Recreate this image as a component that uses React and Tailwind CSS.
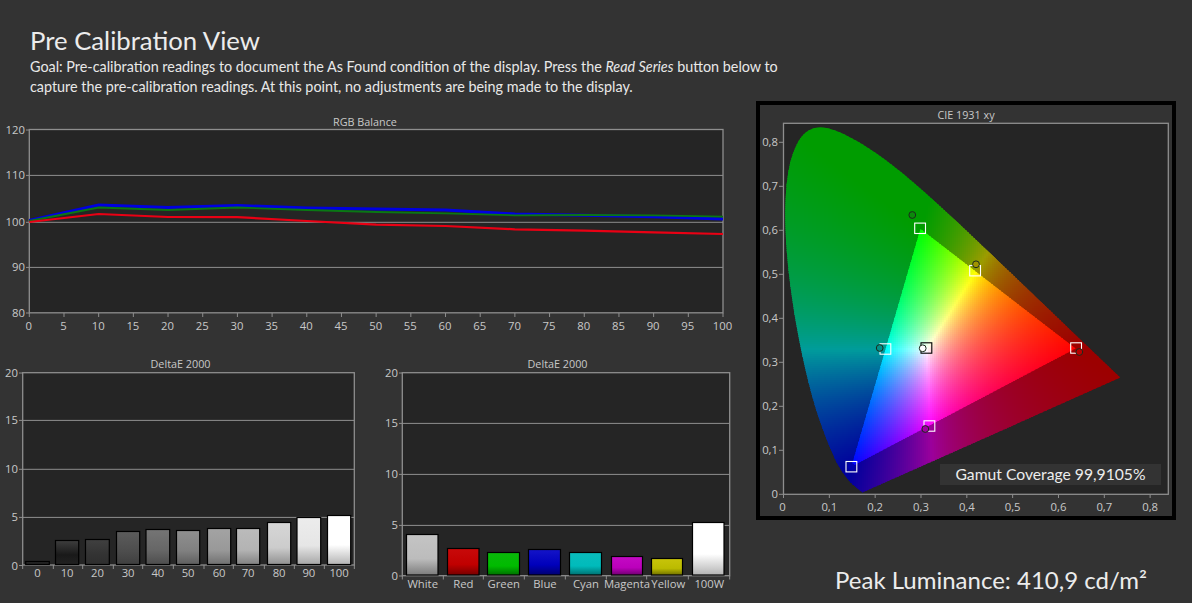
import React from "react";

const AXIS = "#8e8e8e";
const LABEL = "#c8c8c8";
const PLOT = "#252525";
const SANS = "'Open Sans', sans-serif";

const LOCUS = [[.1741,.005],[.1733,.0048],[.1726,.0048],[.1714,.0051],[.1689,.0069],[.1644,.0109],[.1566,.0177],[.144,.0297],[.1241,.0578],[.1096,.0868],[.0913,.1327],[.0687,.2007],[.0454,.295],[.0235,.4127],[.0082,.5384],[.0039,.6548],[.0139,.7502],[.0389,.812],[.0743,.8338],[.1142,.8262],[.1547,.8059],[.1929,.7816],[.2296,.7543],[.2658,.7243],[.3016,.6923],[.3373,.6589],[.3731,.6245],[.4087,.5896],[.4441,.5547],[.4788,.5202],[.5125,.4866],[.5448,.4544],[.5752,.4242],[.6029,.3965],[.627,.3725],[.6482,.3514],[.6658,.334],[.6801,.3197],[.6915,.3083],[.7079,.292],[.719,.2809],[.73,.27],[.7347,.2653]];

const px = (x) => 783.5 + 458.3 * x;
const py = (y) => 494.3 - 440 * y;
const ix = (X) => (X - 783.5) / 458.3;
const iy = (Y) => (494.3 - Y) / 440;

function smooth(points) {
  const out = [];
  const n = points.length;
  for (let i = 0; i < n - 1; i++) {
    const p0 = points[Math.max(i - 1, 0)], p1 = points[i], p2 = points[i + 1], p3 = points[Math.min(i + 2, n - 1)];
    for (let s = 0; s < 6; s++) {
      const t = s / 6, t2 = t * t, t3 = t2 * t;
      const f = (a, b, c, d) => 0.5 * (2 * b + (c - a) * t + (2 * a - 5 * b + 4 * c - d) * t2 + (3 * b - a - 3 * c + d) * t3);
      out.push([f(p0[0], p1[0], p2[0], p3[0]), f(p0[1], p1[1], p2[1], p3[1])]);
    }
  }
  out.push(points[n - 1]);
  return out;
}

function xyToRgb(x, y, k, g) {
  const X = x / y, Z = (1 - x - y) / y;
  let r = 3.2406 * X - 1.5372 - 0.4986 * Z;
  let gr = -0.9689 * X + 1.8758 + 0.0415 * Z;
  let b = 0.0557 * X - 0.204 + 1.057 * Z;
  r = Math.max(r, 0); gr = Math.max(gr, 0); b = Math.max(b, 0);
  const m = Math.max(r, gr, b) || 1;
  const f = (v) => Math.round(255 * k * Math.pow(v / m, g));
  return `rgb(${f(r)},${f(gr)},${f(b)})`;
}

function buildCells(x0, x1, y0, y1, k, g) {
  const out = [];
  const s = 2;
  for (let Y = y0; Y < y1; Y += s) {
    let start = x0, col = null;
    for (let X = x0; X <= x1; X += s) {
      const c = X < x1 ? xyToRgb(ix(X + 1), Math.max(iy(Y + 1), 0.003), k, g) : null;
      if (c !== col) {
        if (col) out.push(<rect key={`${X}-${Y}`} x={start} y={Y} width={X - start + 0.5} height={s + 0.5} fill={col} />);
        start = X; col = c;
      }
    }
  }
  return out;
}

const outerCells = buildCells(782, 1124, 124, 494, 0.61, 1);
const innerCells = buildCells(848, 1080, 226, 470, 1, 0.92);

const pts = (arr) => arr.map(([a, b]) => `${a},${b}`).join(" ");
const locusPts = pts(smooth(LOCUS).map(([x, y]) => [px(x), py(y)]));
const triPts = pts([[1075.5, 348.5], [920.5, 229], [851.5, 466.5]]);

function Chart({ x, y, w, h, className, children }) {
  return (
    <svg width={w} height={h} viewBox={`${x} ${y} ${w} ${h}`} className={`block shrink-0 ${className || ""}`} fontFamily={SANS}>
      {children}
    </svg>
  );
}

function Frame({ l, r, t, b, grid = [] }) {
  return (
    <g>
      <rect x={l} y={t} width={r - l} height={b - t} fill={PLOT} />
      {grid.map((g) => <line key={g} x1={l} x2={r} y1={g} y2={g} stroke={AXIS} strokeWidth="1" />)}
      <rect x={l} y={t} width={r - l} height={b - t} fill="none" stroke={AXIS} strokeWidth="1.3" />
    </g>
  );
}

function YLabels({ items, x }) {
  return items.map(([t, y]) => (
    <g key={t}>
      <line x1={x + 1} x2={x + 5} y1={y} y2={y} stroke={AXIS} />
      <text x={x} y={y + 4} textAnchor="end" fontSize="11.3" fill={LABEL}>{t}</text>
    </g>
  ));
}

function RgbChart() {
  const X = (v) => 29.3 + 6.937 * v;
  const vals = [0, 10, 20, 30, 40, 50, 60, 70, 80, 90, 100];
  const line = (ys) => vals.map((v, i) => `${X(v)},${ys[i]}`).join(" ");
  return (
    <Chart x={0} y={112} w={756} h={226}>
      <text x={365} y={126} textAnchor="middle" fontSize="10.8" fill={LABEL}>RGB Balance</text>
      <Frame l={29.3} r={723} t={129.5} b={312.8} grid={[175.4, 222.3, 267.4]} />
      <YLabels x={25} items={[["120", 130], ["110", 175.4], ["100", 222.3], ["90", 267.4], ["80", 313]]} />
      {Array.from({ length: 21 }, (_, i) => i * 5).map((v) => (
        <g key={v}>
          <line x1={X(v)} x2={X(v)} y1={313} y2={317} stroke={AXIS} />
          <text x={X(v) - 0.5} y={330} textAnchor="middle" fontSize="11.3" fill={LABEL}>{v}</text>
        </g>
      ))}
      <polyline points={line([220.5, 205, 207.5, 205.5, 208, 209, 210, 214, 215.3, 216.7, 219])} fill="none" stroke="#0000e0" strokeWidth="3" />
      <polyline points={line([221, 207.5, 210, 207.5, 210, 212, 213.3, 215.3, 215, 215.3, 216.7])} fill="none" stroke="#0a7814" strokeWidth="1.8" />
      <polyline points={line([222, 214, 217, 217.2, 221, 224.7, 226, 229.3, 230.7, 232.3, 234])} fill="none" stroke="#ea0014" strokeWidth="2.2" />
    </Chart>
  );
}

function Bar({ x0, x1, top, bottom, stops, id }) {
  return (
    <g>
      <defs>
        <linearGradient id={id} x1="0" y1="0" x2="0" y2="1">
          {stops.map(([o, c]) => <stop key={o} offset={o} stopColor={c} />)}
        </linearGradient>
      </defs>
      <rect x={x0} y={top} width={x1 - x0} height={bottom - top} fill={`url(#${id})`} stroke="#000" strokeWidth="1.2" />
    </g>
  );
}

const grayBars = [
  [25.7, 49.3, 561.5, "#2a2a2a", "#222222", "#2a2a2a"],
  [55.5, 78.7, 540.5, "#3e3e3e", "#191919", "#222222"],
  [85.5, 109.3, 539.5, "#404040", "#333333", "#2e2e2e"],
  [116.5, 139.7, 531.5, "#5c5c5c", "#4d4d4d", "#3f3f3f"],
  [146, 169.7, 529.5, "#757575", "#666666", "#4d4d4d"],
  [176.5, 199.7, 530.5, "#8f8f8f", "#808080", "#5e5e5e"],
  [207.5, 230.7, 528.5, "#a3a3a3", "#999999", "#707070"],
  [236.5, 259.7, 528.5, "#bbbbbb", "#b3b3b3", "#818181"],
  [267.5, 290.7, 522.5, "#d6d6d6", "#cccccc", "#909090"],
  [297, 320.7, 517.5, "#ececec", "#e6e6e6", "#a6a6a6"],
  [327.5, 350.7, 515.5, "#ffffff", "#ffffff", "#b4b4b4"],
];
const grayNames = ["0", "10", "20", "30", "40", "50", "60", "70", "80", "90", "100"];

function GrayChart() {
  const ticks = [68, 160, 248, 340, 428, 520, 612, 700, 793, 883, 973, 1063].map((v) => v / 3);
  return (
    <Chart x={0} y={354} w={370} h={240}>
      <text x={180.5} y={368} textAnchor="middle" fontSize="10.8" fill={LABEL}>DeltaE 2000</text>
      <Frame l={22.7} r={354.3} t={372.7} b={565} grid={[420.4, 469.3, 517.4]} />
      <YLabels x={18} items={[["20", 373], ["15", 420.4], ["10", 469.3], ["5", 517.4], ["0", 565.5]]} />
      {ticks.map((t) => <line key={t} x1={t} x2={t} y1={565} y2={569} stroke={AXIS} />)}
      {grayBars.map((b, i) => (
        <Bar key={i} id={`g${i}`} x0={b[0]} x1={b[1]} top={b[2]} bottom={564.5} stops={[[0, b[3]], [0.6, b[4]], [1, b[5]]]} />
      ))}
      {grayBars.map((b, i) => (
        <text key={i} x={(b[0] + b[1]) / 2} y={577} textAnchor="middle" fontSize="11.3" fill={LABEL}>{grayNames[i]}</text>
      ))}
    </Chart>
  );
}

const colorBars = [
  ["White", 406.5, 438, 534.5, "#c4c4c4", "#bcbcbc", "#7c7c7c", 422.7],
  ["Red", 447.5, 479, 548.5, "#c80a0a", "#c00000", "#780000", 463.3],
  ["Green", 487.5, 519.5, 552.5, "#0ab80a", "#00bb00", "#007000", 503.7],
  ["Blue", 528.5, 560.5, 549.5, "#1414c8", "#0000bb", "#000070", 545],
  ["Cyan", 569.5, 601.5, 552.5, "#0abcbc", "#00bbbb", "#007070", 586],
  ["Magenta", 611.5, 642.5, 556.5, "#c40ac4", "#bb00bb", "#700070", 627],
  ["Yellow", 651.5, 682.5, 558.5, "#c8c40a", "#bbbb00", "#707000", 668.3],
  ["100W", 692.5, 724, 522.5, "#ffffff", "#ffffff", "#b4b4b4", 709.3],
];

function ColorChart() {
  const ticks = [97, 220, 340, 463, 586, 709, 830, 955, 1079].map((v) => 370 + v / 3);
  return (
    <Chart x={370} y={354} w={386} h={240}>
      <text x={557.5} y={368} textAnchor="middle" fontSize="10.8" fill={LABEL}>DeltaE 2000</text>
      <Frame l={402.3} r={729.7} t={372.7} b={575.7} grid={[423.4, 474.4, 525.4]} />
      <YLabels x={398} items={[["20", 373], ["15", 423.4], ["10", 474.4], ["5", 525.4], ["0", 576]]} />
      {ticks.map((t) => <line key={t} x1={t} x2={t} y1={575.7} y2={579.5} stroke={AXIS} />)}
      {colorBars.map((b, i) => (
        <Bar key={i} id={`c${i}`} x0={b[1]} x1={b[2]} top={b[3]} bottom={575} stops={[[0, b[4]], [0.6, b[5]], [1, b[6]]]} />
      ))}
      {colorBars.map((b) => (
        <text key={b[0]} x={b[7]} y={588} textAnchor="middle" fontSize="11.3" fill={LABEL}>{b[0]}</text>
      ))}
    </Chart>
  );
}

const squares = [[920, 228.3, "#fff"], [975, 270.7, "#fff"], [1076, 348, "#fff"], [885.3, 349, "#fff"], [926.3, 348, "#000"], [929.3, 426, "#fff"], [851.3, 466.7, "#fff"]];
const circles = [[912.3, 215, "#0b8a0b"], [976, 264.3, "#a09400"], [1079.3, 352, "#b80000"], [879.7, 348, "#009088"], [922.7, 348.3, "#fff"], [925.3, 429, "#a000a0"], [851.3, 466.7, "#0000b0"]];

function CieChart() {
  const xt = ["0", "0,1", "0,2", "0,3", "0,4", "0,5", "0,6", "0,7", "0,8"];
  const yt = ["0", "0,1", "0,2", "0,3", "0,4", "0,5", "0,6", "0,7", "0,8"];
  return (
    <svg width={412} height={411} viewBox="760 105 412 411" className="block" fontFamily={SANS}>
      <defs>
        <clipPath id="locus"><polygon points={locusPts} /></clipPath>
        <clipPath id="tri"><polygon points={triPts} /></clipPath>
      </defs>
      <text x={966} y={119} textAnchor="middle" fontSize="10.8" fill={LABEL}>CIE 1931 xy</text>
      <Frame l={783.5} r={1168.3} t={123.3} b={494.3} />
      <g clipPath="url(#locus)" shapeRendering="crispEdges">{outerCells}</g>
      <g clipPath="url(#tri)" shapeRendering="crispEdges">{innerCells}</g>
      {yt.map((t, i) => {
        const Y = 494.3 - 44 * i;
        return (
          <g key={t}>
            <line x1={779} x2={783.5} y1={Y} y2={Y} stroke={AXIS} />
            <text x={778} y={Y + 4} textAnchor="end" fontSize="11.3" fill={LABEL}>{t}</text>
          </g>
        );
      })}
      {xt.map((t, i) => {
        const X = 783.5 + 45.83 * i;
        return (
          <g key={t}>
            <line x1={X} x2={X} y1={494.3} y2={498} stroke={AXIS} />
            <text x={i === 0 ? X - 1 : X} y={511} textAnchor="middle" fontSize="11.3" fill={LABEL}>{t}</text>
          </g>
        );
      })}
      {squares.map(([x, y, c], i) => (
        <rect key={i} x={x - 5.3} y={y - 5.2} width="10.8" height="10.4" fill="none" stroke={c} strokeWidth="1.1" />
      ))}
      {circles.map(([x, y, c], i) => (
        <circle key={i} cx={x} cy={y} r="3.4" fill={c} stroke={i === 6 ? "none" : "#1c2a1c"} strokeWidth="1" />
      ))}
    </svg>
  );
}

export default function App() {
  return (
    <div className="w-[1192px] h-[603px] overflow-hidden bg-[#333333] text-[#e8e8e8]" style={{ fontFamily: "Lato, 'Open Sans', sans-serif" }}>
      <header className="h-[101px] pl-[30px] pt-[24px]">
        <h1 className="text-[25.7px] leading-[33px] font-normal text-[#ececec]">Pre Calibration View</h1>
        <p className="text-[14.37px] leading-[20px] whitespace-nowrap">
          Goal: Pre-calibration readings to document the As Found condition of the display. Press the <em>Read Series</em> button below to
          <br />
          capture the pre-calibration readings. At this point, no adjustments are being made to the display.
        </p>
      </header>
      <div className="flex">
        <div className="w-[756px] shrink-0 pt-[11px]">
          <RgbChart />
          <div className="flex mt-[16px]">
            <GrayChart />
            <ColorChart />
          </div>
        </div>
        <div className="w-[420px] shrink-0">
          <div className="relative border-[4px] border-black w-[420px] h-[419px]">
            <CieChart />
            <div className="absolute left-[180px] top-[359px] w-[221px] h-[21px] bg-[#333333] text-center text-[15.7px] leading-[21px] text-[#ececec]">
              Gamut Coverage 99,9105%
            </div>
          </div>
          <p className="mt-[46px] pl-[79px] whitespace-nowrap text-[24px] leading-[28px] text-[#ececec]">Peak Luminance: 410,9 cd/m²</p>
        </div>
      </div>
    </div>
  );
}
